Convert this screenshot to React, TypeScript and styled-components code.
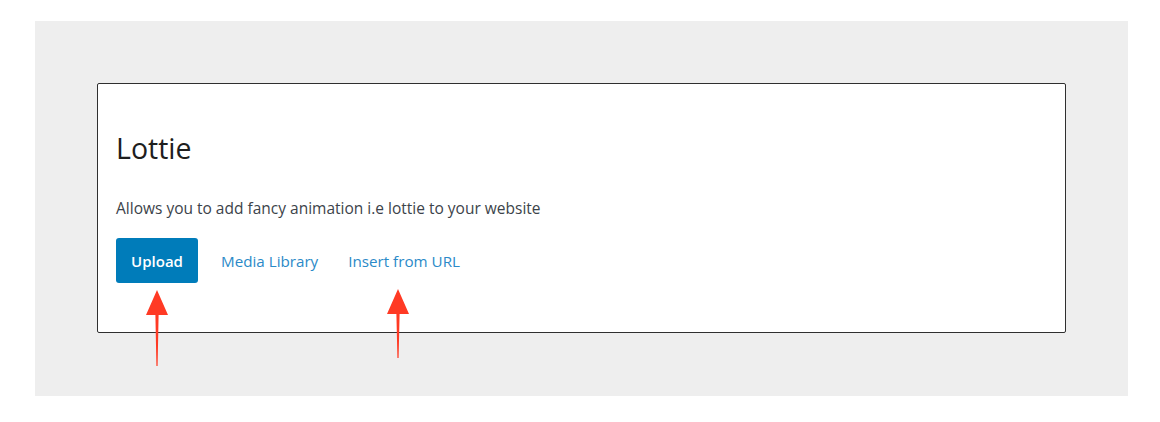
import React from "react";
import styled, { createGlobalStyle } from "styled-components";

const Global = createGlobalStyle`
  html, body { margin: 0; padding: 0; background: #ffffff; }
  body { font-family: "Open Sans", "Noto Sans", sans-serif; }
`;

const Page = styled.div`
  width: 1160px;
  height: 422px;
  padding: 21px 32px 26px 35px;
  box-sizing: border-box;
`;

const Stage = styled.div`
  position: relative;
  background: #eeeeee;
  height: 375px;
  padding: 62px;
  box-sizing: border-box;
`;

const Card = styled.div`
  background: #ffffff;
  border: 1px solid #2f2f2f;
  border-radius: 2px;
  height: 250px;
  box-sizing: border-box;
  padding: 44px 18px 0 18px;
`;

const Title = styled.h2`
  margin: 0;
  font-size: 28.5px;
  font-weight: 400;
  color: #1e1e1e;
  line-height: 40px;
`;

const Desc = styled.p`
  margin: 30px 0 0 0;
  font-size: 15.5px;
  color: #3c434a;
  line-height: 20px;
`;

const Actions = styled.div`
  display: flex;
  align-items: center;
  margin-top: 20px;
`;

const UploadButton = styled.button`
  width: 82px;
  height: 45px;
  border: none;
  border-radius: 3px;
  background: #007cba;
  color: #ffffff;
  font-family: inherit;
  font-size: 15px;
  font-weight: 600;
  padding: 0;
  margin-right: 23px;
`;

const LinkButton = styled.a<{ $gap?: number }>`
  color: #2b8ac8;
  font-size: 15.2px;
  text-decoration: none;
  margin-right: ${(p) => p.$gap ?? 0}px;
`;

const ArrowWrap = styled.svg<{ $left: number; $top: number }>`
  position: absolute;
  left: ${(p) => p.$left}px;
  top: ${(p) => p.$top}px;
`;

const Arrow = ({ left, top, len }: { left: number; top: number; len: number }) => (
  <ArrowWrap $left={left} $top={top} width="24" height={len} viewBox={`0 0 24 ${len}`}>
    <polygon points={`12,0 23,25 13.6,25 12.6,${len} 11.4,${len} 10.4,25 1,25`} fill="#ff3a24" />
  </ArrowWrap>
);

export default function App() {
  return (
    <>
      <Global />
      <Page>
        <Stage>
          <Card>
            <Title>Lottie</Title>
            <Desc>Allows you to add fancy animation i.e lottie to your website</Desc>
            <Actions>
              <UploadButton>Upload</UploadButton>
              <LinkButton href="#" $gap={30}>Media Library</LinkButton>
              <LinkButton href="#">Insert from URL</LinkButton>
            </Actions>
          </Card>
          <Arrow left={110} top={269} len={76} />
          <Arrow left={351} top={268} len={69} />
        </Stage>
      </Page>
    </>
  );
}
